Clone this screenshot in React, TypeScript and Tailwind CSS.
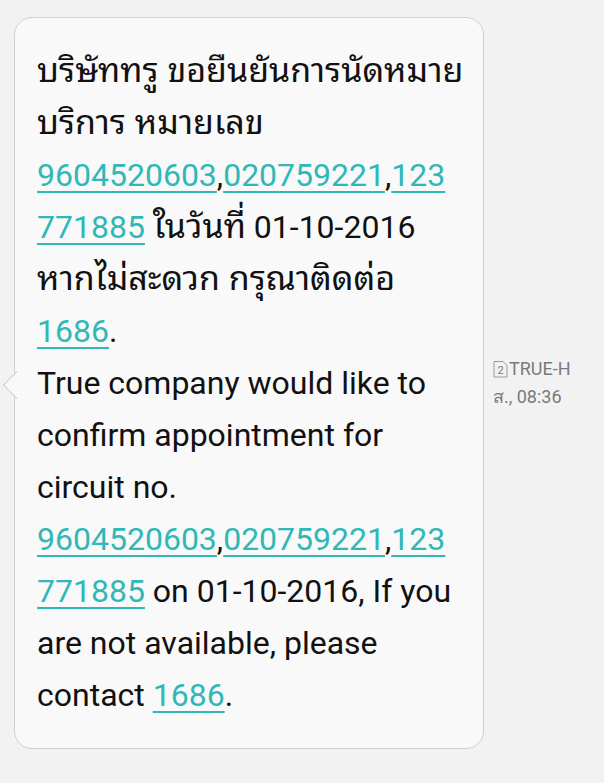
const LINK = 'text-[#2fb8b8] underline decoration-[2px] underline-offset-[5px]';

function L({ children }: { children: React.ReactNode }) {
  return <span className={LINK}>{children}</span>;
}

// Thai runs use a slightly larger size so their widths match the phone font
function T({ children }: { children: React.ReactNode }) {
  return (
    <span className="text-[34px] leading-none" style={{ fontFamily: '"Noto Sans Thai Looped", Loma, Garuda, "Noto Sans Thai", sans-serif' }}>
      {children}
    </span>
  );
}

function Line({ children }: { children: React.ReactNode }) {
  return <div className="h-[52px]">{children}</div>;
}

export default function App() {
  return (
    <div className="h-[783px] w-[604px] bg-[#f2f2f2] overflow-hidden" style={{ fontFamily: 'Roboto, "Noto Sans", sans-serif' }}>
      <div className="flex items-center pl-[14px] pt-[17px]">
        {/* Bubble */}
        <div className="relative w-[470px] rounded-[18px] border border-[#cfcfcf] bg-[#f9f9f9] pl-[22px] pr-[4px] pt-[27px] pb-[27px]">
          {/* tail */}
          <div className="absolute left-[-8px] top-[357px] h-[20px] w-[20px] rotate-45 border-b border-l border-[#cfcfcf] bg-[#f9f9f9]" />
          <div className="relative text-[32px] leading-[52px] text-[#111] whitespace-nowrap">
            <Line><T>บริษัททรู ขอยืนยันการนัดหมาย</T></Line>
            <Line><T>บริการ หมายเลข</T></Line>
            <Line>
              <L>9604520603</L>,<L>020759221</L>,<L>123</L>
            </Line>
            <Line>
              <L>771885</L> <T>ในวันที่</T> 01-10-2016
            </Line>
            <Line><T>หากไม่สะดวก กรุณาติดต่อ</T></Line>
            <Line>
              <L>1686</L>.
            </Line>
            <Line>True company would like to</Line>
            <Line>confirm appointment for</Line>
            <Line>circuit no.</Line>
            <Line>
              <L>9604520603</L>,<L>020759221</L>,<L>123</L>
            </Line>
            <Line>
              <L>771885</L> on 01-10-2016, If you
            </Line>
            <Line>are not available, please</Line>
            <Line>
              contact <L>1686</L>.
            </Line>
          </div>
        </div>

        {/* Meta */}
        <div className="ml-[9px] flex flex-col text-[18px] leading-[28px] text-[#7a7a7a]">
          <div className="flex items-center gap-[1px]">
            <svg width="15" height="18" viewBox="0 0 15 18" className="mb-[1px]">
              <path d="M1 1.5 H10 L14 5.5 V17 H1 Z" fill="none" stroke="#9a9a9a" strokeWidth="1" />
              <text x="7.5" y="13.5" fontSize="11" textAnchor="middle" fill="#7a7a7a" fontFamily="Roboto, sans-serif">2</text>
            </svg>
            <span>TRUE-H</span>
          </div>
          <div>ส., 08:36</div>
        </div>
      </div>
    </div>
  );
}
